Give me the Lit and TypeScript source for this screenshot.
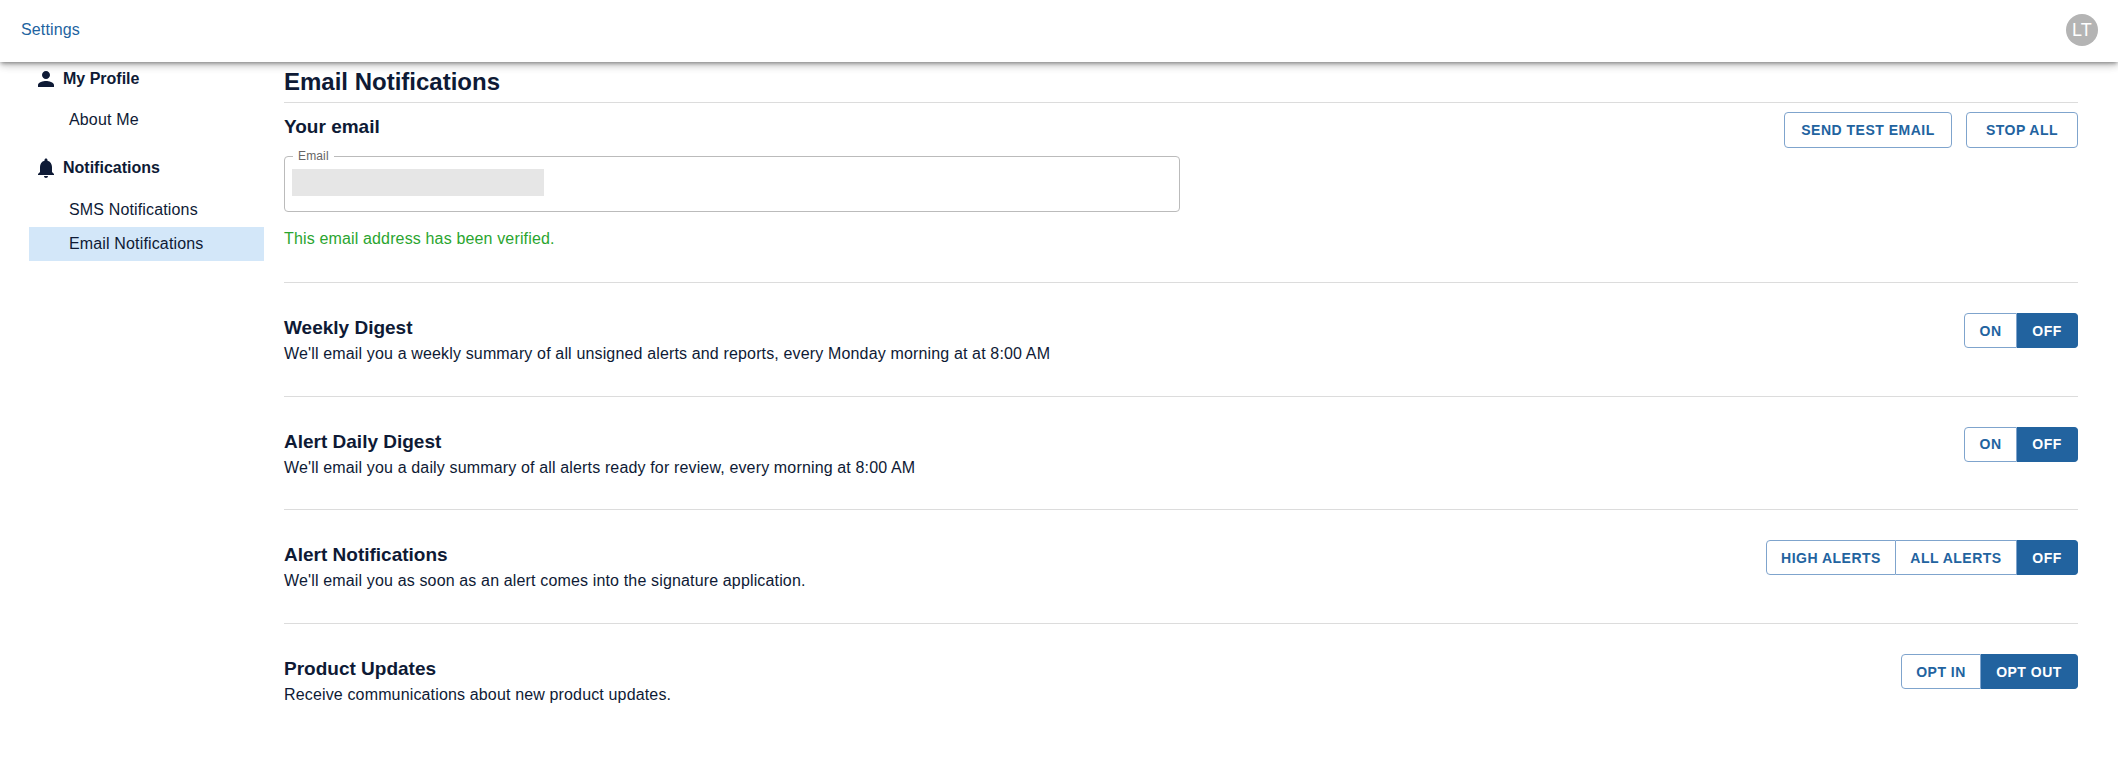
import { LitElement, html, css } from "lit";
import { customElement } from "lit/decorators.js";

type Option = { label: string; width: number };
type Pref = { title: string; text: string; options: Option[] };

const prefs: Pref[] = [
  {
    title: "Weekly Digest",
    text: "We'll email you a weekly summary of all unsigned alerts and reports, every Monday morning at at 8:00 AM",
    options: [
      { label: "ON", width: 53 },
      { label: "OFF", width: 61 },
    ],
  },
  {
    title: "Alert Daily Digest",
    text: "We'll email you a daily summary of all alerts ready for review, every morning at 8:00 AM",
    options: [
      { label: "ON", width: 53 },
      { label: "OFF", width: 61 },
    ],
  },
  {
    title: "Alert Notifications",
    text: "We'll email you as soon as an alert comes into the signature application.",
    options: [
      { label: "HIGH ALERTS", width: 130 },
      { label: "ALL ALERTS", width: 121 },
      { label: "OFF", width: 61 },
    ],
  },
  {
    title: "Product Updates",
    text: "Receive communications about new product updates.",
    options: [
      { label: "OPT IN", width: 80 },
      { label: "OPT OUT", width: 97 },
    ],
  },
];

@customElement("app-root")
export class AppRoot extends LitElement {
  static styles = css`
    * {
      margin: 0;
      padding: 0;
      box-sizing: border-box;
    }

    :host {
      display: block;
      min-height: 100vh;
      background: #fff;
      color: #0e1a35;
      font-family: "Liberation Sans", Arial, sans-serif;
      font-size: 16px;
      letter-spacing: 0.15px;
    }

    .topbar {
      position: relative;
      z-index: 1;
      height: 62px;
      display: flex;
      align-items: center;
      justify-content: space-between;
      padding: 0 20px 2px 21px;
      background: #fff;
      box-shadow: 0 2px 4px -1px rgba(0, 0, 0, 0.4), 0 4px 8px rgba(0, 0, 0, 0.14),
        0 1px 10px rgba(0, 0, 0, 0.12);
    }

    .crumb {
      color: #22639f;
    }

    .avatar {
      width: 32px;
      height: 32px;
      border-radius: 50%;
      background: #b4b4b4;
      color: #fff;
      font-size: 18px;
      display: flex;
      align-items: center;
      justify-content: center;
    }

    .page {
      display: flex;
    }

    .sidebar {
      width: 235px;
      margin-left: 29px;
      padding-top: 1px;
      flex: none;
    }

    .group {
      display: flex;
      align-items: center;
      gap: 9px;
      height: 32px;
      margin-left: 9px;
      font-weight: 700;
      letter-spacing: 0;
    }

    .group svg {
      width: 16px;
      height: 20px;
      flex: none;
      fill: currentColor;
    }

    .link {
      height: 34px;
      line-height: 34px;
      padding-left: 40px;
    }

    .link.active {
      background: #d3e7f9;
    }

    .spaced {
      margin-top: 15px;
    }

    .first {
      margin-top: 8px;
    }

    .sms {
      margin-top: 9px;
    }

    main {
      flex: 1;
      margin-left: 20px;
      margin-right: 40px;
    }

    h1 {
      font-size: 24px;
      line-height: 40px;
      height: 41px;
      letter-spacing: 0;
      border-bottom: 1px solid #dcdcdc;
    }

    .email-row {
      display: flex;
      justify-content: space-between;
      align-items: flex-start;
      height: 179px;
      padding-top: 9px;
    }

    h2 {
      font-size: 19px;
      font-weight: 700;
      line-height: 24px;
      letter-spacing: 0;
    }

    .email-col h2 {
      margin-top: 3px;
    }

    .field {
      position: relative;
      width: 896px;
      height: 56px;
      margin-top: 17px;
      border: 1px solid #bbb;
      border-radius: 4px;
      padding: 12px 7px;
    }

    .field label {
      position: absolute;
      top: -7px;
      left: 8px;
      padding: 0 5px;
      background: #fff;
      color: #666;
      font-size: 12px;
      line-height: 13px;
    }

    .mask {
      width: 252px;
      height: 27px;
      background: #e6e6e6;
    }

    .verified {
      margin-top: 17px;
      color: #2aa52f;
      line-height: 20px;
    }

    .actions {
      display: flex;
      gap: 14px;
    }

    button {
      font: inherit;
      font-size: 14px;
      font-weight: 700;
      letter-spacing: 0.5px;
      color: #22639f;
      background: #fff;
      border: 1px solid #7fa4cd;
      height: 36px;
      border-radius: 4px;
      white-space: nowrap;
    }

    .send {
      width: 168px;
    }

    .stop {
      width: 112px;
    }

    .pref {
      display: flex;
      justify-content: space-between;
      align-items: flex-start;
      height: 113.7px;
      padding-top: 33px;
      border-top: 1px solid #dcdcdc;
    }

    .pref p {
      margin-top: 2px;
      line-height: 24px;
    }

    .toggle {
      display: flex;
      margin-top: -3px;
    }

    .toggle button {
      height: 35px;
      border-radius: 0;
      border-left-width: 0;
    }

    .toggle button:first-child {
      border-left-width: 1px;
      border-radius: 4px 0 0 4px;
    }

    .toggle button:last-child {
      border-radius: 0 4px 4px 0;
    }

    .toggle button.on {
      background: #22639f;
      border-color: #22639f;
      color: #fff;
    }
  `;

  private toggle(options: Option[]) {
    return html`<div class="toggle">
      ${options.map(
        (o, i) =>
          html`<button
            class=${i === options.length - 1 ? "on" : ""}
            style="width:${o.width}px"
          >
            ${o.label}
          </button>`
      )}
    </div>`;
  }

  render() {
    return html`
      <header class="topbar">
        <span class="crumb">Settings</span>
        <div class="avatar">LT</div>
      </header>
      <div class="page">
        <nav class="sidebar">
          <div class="group">
            <svg viewBox="4 4 16 16"><path d="M12 12c2.21 0 4-1.79 4-4s-1.79-4-4-4-4 1.79-4 4 1.79 4 4 4zm0 2c-2.67 0-8 1.34-8 4v2h16v-2c0-2.66-5.33-4-8-4z" /></svg>
            My Profile
          </div>
          <div class="link first">About Me</div>
          <div class="group spaced">
            <svg viewBox="4 2 16 20"><path d="M12 22c1.1 0 2-.9 2-2h-4c0 1.1.9 2 2 2zm6-6v-5c0-3.07-1.63-5.64-4.5-6.32V4c0-.83-.67-1.5-1.5-1.5s-1.5.67-1.5 1.5v.68C7.64 5.36 6 7.92 6 11v5l-2 2v1h16v-1l-2-2z" /></svg>
            Notifications
          </div>
          <div class="link sms">SMS Notifications</div>
          <div class="link active">Email Notifications</div>
        </nav>
        <main>
          <h1>Email Notifications</h1>
          <section class="email-row">
            <div class="email-col">
              <h2>Your email</h2>
              <div class="field">
                <label>Email</label>
                <div class="mask"></div>
              </div>
              <div class="verified">This email address has been verified.</div>
            </div>
            <div class="actions">
              <button class="send">SEND TEST EMAIL</button>
              <button class="stop">STOP ALL</button>
            </div>
          </section>
          ${prefs.map(
            (p) => html`
              <section class="pref">
                <div>
                  <h2>${p.title}</h2>
                  <p>${p.text}</p>
                </div>
                ${this.toggle(p.options)}
              </section>
            `
          )}
        </main>
      </div>
    `;
  }
}
